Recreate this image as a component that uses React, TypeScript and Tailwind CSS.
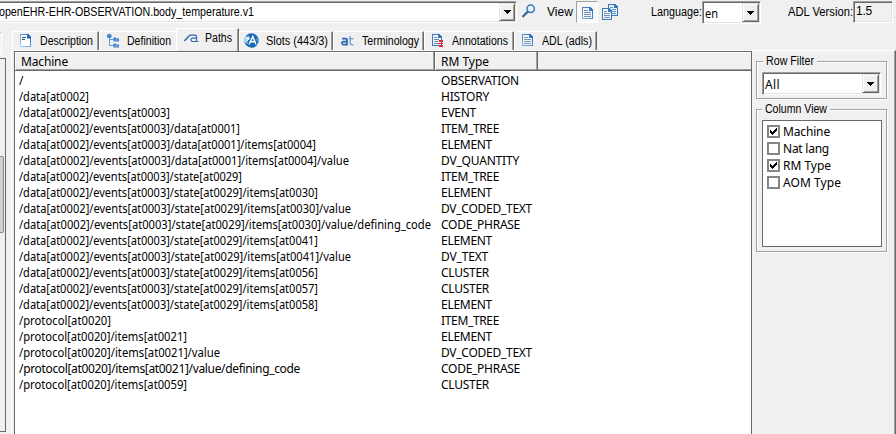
import { useLayoutEffect, useRef } from "react";
import type { ReactNode } from "react";

const UI = "font-['Liberation_Sans',Arial,sans-serif] text-[12px]";
const TABLE = "font-['Noto_Sans','Open_Sans',sans-serif] text-[12px]";

/**
 * Text that takes up exactly the given width: slightly off text is tracked,
 * clearly too wide text is condensed.
 */
function Fit({ w, children, className = "" }: { w: number; children: string; className?: string }) {
  const ref = useRef<HTMLSpanElement>(null);
  useLayoutEffect(() => {
    const el = ref.current;
    if (!el) return;
    el.style.letterSpacing = "0px";
    el.style.transform = "none";
    const natural = el.getBoundingClientRect().width;
    const tracking = (w - natural) / children.length;
    if (tracking < -0.35) {
      el.style.transform = `scaleX(${w / natural})`;
      el.style.marginRight = `${w - natural}px`;
    } else {
      el.style.letterSpacing = `${tracking}px`;
    }
  }, [w, children]);
  return (
    <span className={`flex shrink-0 ${className}`}>
      <span ref={ref} className="inline-block shrink-0 origin-left whitespace-pre">
        {children}
      </span>
    </span>
  );
}

function DocIcon({ className = "" }: { className?: string }) {
  return (
    <svg viewBox="0 0 11 13" className={`h-[13px] w-[11px] shrink-0 ${className}`} shapeRendering="crispEdges">
      <defs>
        <linearGradient id="doc" x1="0" y1="1" x2="1" y2="0">
          <stop offset="0" stopColor="#7fb0dc" />
          <stop offset="1" stopColor="#2667bd" />
        </linearGradient>
      </defs>
      <path d="M0 0H8L11 3V12H0Z" fill="url(#doc)" />
      <path d="M1 1H7V4H10V11H1Z" fill="#eef5fc" />
      <path d="M2 3.5H6M2 5.5H9M2 7.5H9M2 9.5H9" stroke="#7d93ad" strokeWidth="1" />
    </svg>
  );
}

function DescriptionIcon() {
  return (
    <svg viewBox="0 0 12 13" className="h-[13px] w-[12px]">
      <defs>
        <linearGradient id="desc" x1="0" y1="1" x2="1" y2="0">
          <stop offset="0" stopColor="#a9d4f6" />
          <stop offset="1" stopColor="#2667c0" />
        </linearGradient>
      </defs>
      <path d="M.5 .5H8.5L10.5 3.5V12.5H.5Z" fill="#fff" stroke="url(#desc)" />
      <path d="M7 0H8L11 3V4.5H7Z" fill="#2465bd" />
      <path d="M2 3.5H6M2 5.5H5" stroke="#334e70" />
    </svg>
  );
}

function TreeIcon() {
  return (
    <svg viewBox="0 0 13 14" className="h-[14px] w-[13px]">
      <path d="M2.5 2V11.5H8M2.5 5.5H8" fill="none" stroke="#5d9bd6" />
      <rect x="0" y="0" width="4.5" height="4" rx="1.5" fill="#3f86d0" />
      <path d="M6.5 3.5H8.5L9.5 4.5H12V7.5H6.5Z" fill="#3a7ac4" />
      <path d="M6.5 9.5H8.5L9.5 10.5H12V13.5H6.5Z" fill="#3a7ac4" />
      <path d="M7.5 6H11M7.5 12H11" stroke="#8ec3ee" />
    </svg>
  );
}

function PathIcon() {
  return (
    <svg viewBox="0 0 15 9" className="h-[9px] w-[15px]" fill="none" stroke="#3467b5">
      <path d="M.3 7L6 1" strokeWidth="1.4" />
      <path d="M6 1.2H11Q12.5 1.2 12.5 2.8V7.5H14.5M12.5 4.2H8.5Q7 4.4 7 5.8Q7 7.5 8.7 7.5H12.5" strokeWidth="1.2" />
    </svg>
  );
}

function SlotIcon() {
  return (
    <svg viewBox="0 0 15 15" className="h-[15px] w-[15px]">
      <circle cx="7.5" cy="7.5" r="7.2" fill="#1769b4" />
      <path d="M1 4L5 3L6 6L3 8L4 11L2 10L0 8Z" fill="#a9daf5" />
      <path d="M5 11.5L8.8 3.5L12 11.5M6.5 8.8H11" fill="none" stroke="#fff" strokeWidth="1.4" />
      <path d="M2.2 5.2H5L3.2 8" fill="none" stroke="#fff" />
      <path d="M12 4L14 7L13 9Z" fill="#69b4e6" />
    </svg>
  );
}

function AtIcon() {
  return (
    <svg viewBox="0 0 13 10" className="h-[10px] w-[13px]" fill="none">
      <path d="M1 2.7H4.5Q6 2.7 6 4.2V8.7H2.6Q.9 8.7.9 7.1Q.9 5.6 2.6 5.6H6" stroke="#2e66b4" strokeWidth="1.7" />
      <path d="M9.2 0V7Q9.2 8.7 11 8.7H12.4M7.6 2.7H12.4" stroke="#7ba5d3" strokeWidth="1.5" />
    </svg>
  );
}

function AnnotationIcon() {
  return (
    <svg viewBox="0 0 12 13" className="h-[13px] w-[12px]" shapeRendering="crispEdges">
      <path d="M0 0H7L10 3V12H0Z" fill="#3d75b8" />
      <path d="M1 1H6V4H9V11H1Z" fill="#f4f8fc" />
      <path d="M2 3.5H5M2 5.5H7M2 7.5H6M2 9.5H6" stroke="#6e87a5" />
      <path d="M7 6H11V8H7ZM6 9H11V10H6ZM7 11H11V13H7Z" fill="#e5242b" />
    </svg>
  );
}

function CopyIcon() {
  return (
    <svg viewBox="0 0 17 17" className="h-[17px] w-[17px]" shapeRendering="crispEdges">
      <path d="M6 0H13L16 3V12H6Z" fill="#3978bd" />
      <path d="M7 1H12V4H15V11H7Z" fill="#e5f1fb" />
      <path d="M8 3.5H11M10 5.5H14M10 7.5H14M10 9.5H14" stroke="#7390b1" />
      <path d="M0 4H7L10 7V16H0Z" fill="#3978bd" />
      <path d="M1 5H6V8H9V15H1Z" fill="#eef5fc" />
      <path d="M2 7.5H5M2 9.5H8M2 11.5H8M2 13.5H8" stroke="#7390b1" />
    </svg>
  );
}

function SearchIcon() {
  return (
    <svg viewBox="0 0 14 14" className="h-[14px] w-[14px]" fill="none">
      <path d="M1.2 12.3L5.7 7.8" stroke="#2d659f" strokeWidth="2.2" strokeLinecap="round" />
      <circle cx="8.7" cy="4.8" r="3.7" fill="#e7f3fc" stroke="#3478b5" strokeWidth="1.5" />
    </svg>
  );
}

function DropButton({ className = "" }: { className?: string }) {
  return (
    <div
      className={`flex shrink-0 items-center justify-center border border-t-[#e3e3e3] border-r-[#696969] border-b-[#696969] border-l-[#e3e3e3] bg-[#f0f0f0] shadow-[inset_1px_1px_#fff,inset_-1px_-1px_#a0a0a0] ${className}`}
    >
      <svg viewBox="0 0 7 4" className="h-[4px] w-[7px]" shapeRendering="crispEdges">
        <path d="M0 0H7V1H6V2H5V3H4V4H3V3H2V2H1V1H0Z" fill="#000" />
      </svg>
    </div>
  );
}

const SUNKEN =
  "border border-t-[#a0a0a0] border-l-[#a0a0a0] border-r-white border-b-white shadow-[inset_1px_1px_#696969,inset_-1px_-1px_#e3e3e3]";

type TabProps = { icon: ReactNode; pad: string; label: string; w: number; width: string; selected?: boolean; edge?: boolean };

function Tab({ icon, pad, label, w, width, selected, edge = true }: TabProps) {
  return (
    <div
      className={`flex shrink-0 items-center border-t border-l border-t-white border-l-white bg-[#f0f0f0] ${width} ${pad} ${
        selected ? "relative -mb-px h-[23px] pb-[4px]" : "h-[19px] pb-px"
      } ${edge ? "border-r border-r-[#696969] shadow-[inset_-1px_0_#a0a0a0]" : ""}`}
    >
      {icon}
      <Fit w={w} className="ml-auto leading-[14px]">
        {label}
      </Fit>
    </div>
  );
}

const rows: [string, number, string, number][] = [
  ["/", 5, "OBSERVATION", 78],
  ["/data[at0002]", 70, "HISTORY", 48],
  ["/data[at0002]/events[at0003]", 151, "EVENT", 35],
  ["/data[at0002]/events[at0003]/data[at0001]", 221, "ITEM_TREE", 58],
  ["/data[at0002]/events[at0003]/data[at0001]/items[at0004]", 297, "ELEMENT", 51],
  ["/data[at0002]/events[at0003]/data[at0001]/items[at0004]/value", 330, "DV_QUANTITY", 78],
  ["/data[at0002]/events[at0003]/state[at0029]", 223, "ITEM_TREE", 58],
  ["/data[at0002]/events[at0003]/state[at0029]/items[at0030]", 299, "ELEMENT", 51],
  ["/data[at0002]/events[at0003]/state[at0029]/items[at0030]/value", 332, "DV_CODED_TEXT", 91],
  ["/data[at0002]/events[at0003]/state[at0029]/items[at0030]/value/defining_code", 412, "CODE_PHRASE", 79],
  ["/data[at0002]/events[at0003]/state[at0029]/items[at0041]", 299, "ELEMENT", 51],
  ["/data[at0002]/events[at0003]/state[at0029]/items[at0041]/value", 332, "DV_TEXT", 47],
  ["/data[at0002]/events[at0003]/state[at0029]/items[at0056]", 299, "CLUSTER", 48],
  ["/data[at0002]/events[at0003]/state[at0029]/items[at0057]", 299, "CLUSTER", 48],
  ["/data[at0002]/events[at0003]/state[at0029]/items[at0058]", 299, "ELEMENT", 51],
  ["/protocol[at0020]", 92, "ITEM_TREE", 58],
  ["/protocol[at0020]/items[at0021]", 168, "ELEMENT", 51],
  ["/protocol[at0020]/items[at0021]/value", 201, "DV_CODED_TEXT", 91],
  ["/protocol[at0020]/items[at0021]/value/defining_code", 281, "CODE_PHRASE", 79],
  ["/protocol[at0020]/items[at0059]", 168, "CLUSTER", 48],
];

const columns: [string, number, boolean][] = [
  ["Machine", 47, true],
  ["Nat lang", 46, false],
  ["RM Type", 48, true],
  ["AOM Type", 58, false],
];

function Toolbar() {
  return (
    <div className="flex h-[24px] shrink-0 items-start pt-px">
      <div className={`-ml-[2px] flex h-[22px] w-[519px] shrink-0 justify-between bg-white p-px ${SUNKEN}`}>
        <Fit w={255} className="-ml-px leading-[19px]">
          openEHR-EHR-OBSERVATION.body_temperature.v1
        </Fit>
        <DropButton className="h-[18px] w-[16px]" />
      </div>
      <div className="ml-[5px] mt-[3px]">
        <SearchIcon />
      </div>
      <Fit w={26} className="ml-[11px] mt-[4px] leading-[14px]">
        View
      </Fit>
      <div className="ml-[3px] flex h-[22px] w-[22px] shrink-0 items-center justify-center border border-t-[#a0a0a0] border-l-[#a0a0a0] border-r-white border-b-white bg-[#f8f8f8] pt-[2px]">
        <DocIcon />
      </div>
      <div className="ml-[4px] mt-[3px]">
        <CopyIcon />
      </div>
      <Fit w={51} className="ml-[32px] mt-[4px] leading-[14px]">
        Language:
      </Fit>
      <div className={`flex h-[23px] w-[59px] shrink-0 justify-between bg-white p-px ${SUNKEN}`}>
        <Fit w={13} className={`pl-px leading-[22px] ${TABLE}`}>
          en
        </Fit>
        <DropButton className="h-[19px] w-[17px]" />
      </div>
      <Fit w={65} className="ml-[27px] mt-[4px] leading-[14px]">
        ADL Version:
      </Fit>
      <div className={`h-[22px] w-[40px] shrink-0 ${SUNKEN}`}>
        <Fit w={16} className="pl-[2px] leading-[18px]">
          1.5
        </Fit>
      </div>
    </div>
  );
}

function LeftEdge() {
  return (
    <div className="flex w-[11px] shrink-0 flex-col">
      <div className="mt-[8px] h-[23px] w-[2px] border-t border-r border-b border-[#fff] border-t-[#c8c8c8]" />
      <div className="mt-[3px] flex h-[374px] w-[6px] flex-col border-t border-r border-b border-[#696969] bg-[#f0f0f0] pt-[97px]">
        <div className="h-[77px] w-[4px] rounded-r-[2px] border-t border-r border-b border-[#8b8b8b] bg-[#d0d0d2]" />
      </div>
    </div>
  );
}

function PathTable() {
  return (
    <div className={`flex w-[738px] shrink-0 flex-col border-x border-t border-[#696969] bg-white ${TABLE}`}>
      <div className="flex h-[19px] shrink-0 border-b border-[#696969] bg-[#f0f0f0] leading-[20px] shadow-[inset_1px_1px_#fff,inset_0_-1px_#a0a0a0]">
        <div className="w-[420px] border-r border-[#696969] pl-[6px] shadow-[inset_-1px_0_#a0a0a0]">
          <Fit w={47}>Machine</Fit>
        </div>
        <div className="w-[103px] border-r border-[#696969] pl-[6px] shadow-[inset_1px_0_#fff,inset_-1px_0_#a0a0a0]">
          <Fit w={48}>RM Type</Fit>
        </div>
      </div>
      <div className="flex flex-col pt-[2px]">
        {rows.map(([path, pw, type, tw], i) => (
          <div key={i} className="flex h-[16px] leading-[16px]">
            <div className="w-[426px] pl-[4px]">
              <Fit w={pw}>{path}</Fit>
            </div>
            <Fit w={tw}>{type}</Fit>
          </div>
        ))}
      </div>
    </div>
  );
}

const GROUP =
  "min-w-0 w-[131px] border border-[#a0a0a0] shadow-[inset_1px_1px_#fff,1px_1px_#fff]";

function Filters() {
  return (
    <div className="ml-[4px] flex flex-col pt-[4px]">
      <fieldset className={`h-[44px] pl-[5px] ${GROUP}`}>
        <legend className="ml-px h-[13px] bg-[#f0f0f0] px-[3px] leading-[13px]">
          <Fit w={48}>Row Filter</Fit>
        </legend>
        <div className={`mt-[4px] flex h-[23px] w-[119px] justify-between bg-white p-px ${SUNKEN}`}>
          <Fit w={15} className={`pl-px leading-[21px] ${TABLE}`}>
            All
          </Fit>
          <DropButton className="h-[19px] w-[17px]" />
        </div>
      </fieldset>
      <fieldset className={`mt-[4px] h-[149px] pl-[5px] ${GROUP}`}>
        <legend className="bg-[#f0f0f0] px-[3px] leading-[13px]">
          <Fit w={62}>Column View</Fit>
        </legend>
        <div className={`mt-[4px] flex h-[127px] w-[120px] flex-col border border-[#696969] bg-white pl-[4px] pt-[2px] ${TABLE}`}>
          {columns.map(([label, w, checked]) => (
            <div key={label} className="flex h-[17px] items-center leading-[17px]">
              <div className="mr-[3px] flex h-[13px] w-[13px] items-center justify-center border-2 border-[#868686] bg-white">
                {checked && (
                  <svg viewBox="0 0 7 7" className="h-[7px] w-[7px]" shapeRendering="crispEdges">
                    <path d="M0 2H1V3H2V4H3V3H4V2H5V1H6V0H7V3H6V4H5V5H4V6H3V7H2V6H1V5H0Z" fill="#000" />
                  </svg>
                )}
              </div>
              <Fit w={w}>{label}</Fit>
            </div>
          ))}
        </div>
      </fieldset>
    </div>
  );
}

export default function App() {
  return (
    <div className={`flex h-[434px] w-[896px] flex-col overflow-hidden bg-[#f0f0f0] text-black ${UI}`}>
      <Toolbar />
      <div className="flex min-h-0 flex-1">
        <LeftEdge />
        <div className="flex min-w-0 flex-1 flex-col">
          <div className="z-10 flex h-[26px] shrink-0 items-end pl-px">
            <Tab icon={<DescriptionIcon />} pad="pl-[7px] pr-[5px]" label="Description" w={53} width="w-[87px]" />
            <Tab icon={<TreeIcon />} pad="pl-[7px] pr-[5px]" label="Definition" w={44} width="w-[77px]" edge={false} />
            <Tab icon={<PathIcon />} pad="pl-[7px] pr-[6px]" label="Paths" w={27} width="w-[63px]" selected />
            <Tab icon={<SlotIcon />} pad="pl-[4px] pr-[4px]" label="Slots (443/3)" w={62} width="w-[94px]" />
            <Tab icon={<AtIcon />} pad="pl-[7px] pr-[4px]" label="Terminology" w={57} width="w-[91px]" />
            <Tab icon={<AnnotationIcon />} pad="pl-[7px] pr-[5px]" label="Annotations" w={56} width="w-[90px]" />
            <Tab icon={<DocIcon />} pad="pl-[7px] pr-[4px]" label="ADL (adls)" w={50} width="w-[83px]" />
          </div>
          <div className="flex min-h-0 flex-1 border-t border-r border-l border-t-white border-l-white border-r-[#696969] pl-[2px] shadow-[inset_-1px_0_#a0a0a0]">
            <PathTable />
            <Filters />
          </div>
        </div>
      </div>
    </div>
  );
}
